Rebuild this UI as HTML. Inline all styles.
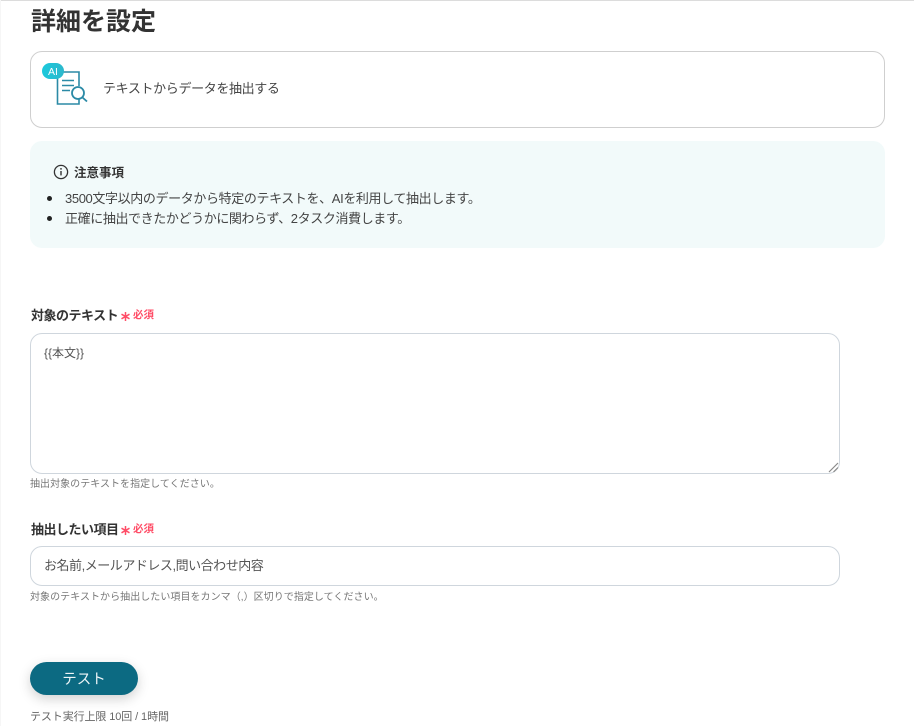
<!DOCTYPE html>
<html lang="ja">
<head>
<meta charset="utf-8">
<style>
html,body{margin:0;padding:0;background:#fff}
body{width:914px;height:726px;position:relative;overflow:hidden;font-family:"Liberation Sans","Noto Sans CJK JP",sans-serif;color:#333}
div,span{position:absolute;white-space:nowrap}
.abs{position:absolute}
.t{filter:blur(.3px)}
</style>
</head>
<body>
<div style="left:0;top:0;width:914px;height:1px;background:#dcdcdc"></div>
<div style="left:0;top:0;width:1px;height:726px;background:#f6f6f6"></div>

<div class="t" style="left:31px;top:7px;font-size:25px;line-height:30px;font-weight:700;color:#333">詳細を設定</div>

<div style="left:30px;top:51px;width:853px;height:75px;border:1px solid #cfcfcf;border-radius:12px"></div>
<svg class="abs t" style="left:40px;top:60px" width="50" height="46" viewBox="0 0 50 46">
<defs><linearGradient id="g" x1="0" y1="0" x2="1" y2="0"><stop offset="0" stop-color="#1bc9dc"/><stop offset="1" stop-color="#2cb8cc"/></linearGradient></defs>
<path d="M17.500 14V44H39V39M39 26V12H17.500" fill="none" stroke="#2b8aa6" stroke-width="1.600"/>
<path d="M22 20.500H34M22 25.500H34M22 30.500H30" stroke="#2b8aa6" stroke-width="1.600" fill="none"/>
<circle cx="38" cy="33" r="6" fill="#fff" stroke="#2b8aa6" stroke-width="1.800"/>
<path d="M42.500 37.500L47 41.500" stroke="#2b8aa6" stroke-width="1.800"/>
<rect x="2" y="3" width="22" height="16" rx="8" fill="url(#g)"/>
<text x="13" y="15" font-size="10.500" font-family="Liberation Sans" fill="#fff" text-anchor="middle">AI</text>
</svg>
<div class="t" style="left:103px;top:79px;font-size:13px;line-height:20px;letter-spacing:-.36px;color:#444">テキストからデータを抽出する</div>

<div style="left:30px;top:141px;width:855px;height:107px;background:#f2fafa;border-radius:12px"></div>
<svg class="abs t" style="left:53px;top:164px" width="16" height="16" viewBox="0 0 16 16">
<circle cx="8" cy="8" r="6.600" fill="none" stroke="#333" stroke-width="1.300"/>
<path d="M8 7V11.400" stroke="#333" stroke-width="1.400"/>
<circle cx="8" cy="4.900" r=".9" fill="#333"/>
</svg>
<div class="t" style="left:74px;top:164px;font-size:12.500px;line-height:19px;font-weight:700;color:#333">注意事項</div>
<div style="left:47px;top:196px;width:5px;height:5px;border-radius:50%;background:#222"></div>
<div style="left:47px;top:216px;width:5px;height:5px;border-radius:50%;background:#222"></div>
<div class="t" style="left:65px;top:189px;font-size:13px;line-height:19px;letter-spacing:-.38px;color:#444">3500文字以内のデータから特定のテキストを、AIを利用して抽出します。</div>
<div class="t" style="left:65px;top:209px;font-size:13px;line-height:19px;letter-spacing:-.39px;color:#444">正確に抽出できたかどうかに関わらず、2タスク消費します。</div>

<div class="t" style="left:31px;top:306px;font-size:13px;line-height:19px;font-weight:700;letter-spacing:-.5px;color:#333">対象のテキスト</div>
<svg class="abs t" style="left:120px;top:311px" width="11" height="11" viewBox="0 0 11 11"><path d="M5.500 1V10M1.500 3.200L9.500 7.800M9.500 3.200L1.500 7.800" stroke="#ff4d67" stroke-width="1.500"/></svg>
<div class="t" style="left:133px;top:307px;font-size:10.500px;line-height:17px;color:#ff4d67;font-weight:700">必須</div>
<div style="left:30px;top:333px;width:808px;height:139px;border:1px solid #cfd6dd;border-radius:12px"></div>
<div class="t" style="left:44px;top:344px;font-size:12px;line-height:18px;color:#555">{{本文}}</div>
<svg class="abs" style="left:828px;top:462px" width="11" height="11" viewBox="0 0 11 11">
<path d="M1 10L10 1M5.500 10L10 5.500" stroke="#8a8a8a" stroke-width="1.200" fill="none"/>
</svg>
<div class="t" style="left:30px;top:477px;font-size:10px;line-height:15px;letter-spacing:.04px;color:#777">抽出対象のテキストを指定してください。</div>

<div class="t" style="left:31px;top:520px;font-size:13px;line-height:19px;font-weight:700;letter-spacing:-.5px;color:#333">抽出したい項目</div>
<svg class="abs t" style="left:120px;top:525px" width="11" height="11" viewBox="0 0 11 11"><path d="M5.500 1V10M1.500 3.200L9.500 7.800M9.500 3.200L1.500 7.800" stroke="#ff4d67" stroke-width="1.500"/></svg>
<div class="t" style="left:133px;top:521px;font-size:10.500px;line-height:17px;color:#ff4d67;font-weight:700">必須</div>
<div style="left:30px;top:546px;width:808px;height:38px;border:1px solid #cfd6dd;border-radius:12px"></div>
<div class="t" style="left:44px;top:556px;font-size:13px;line-height:20px;letter-spacing:-.47px;color:#555">お名前,メールアドレス,問い合わせ内容</div>
<div class="t" style="left:30px;top:590px;font-size:10px;line-height:15px;letter-spacing:.05px;color:#777">対象のテキストから抽出したい項目をカンマ（,）区切りで指定してください。</div>

<div style="left:30px;top:662px;width:108px;height:33px;background:#0c6a82;border-radius:17px;box-shadow:0 4px 12px rgba(0,0,0,.18)"></div>
<div class="t" style="left:30px;top:664px;width:108px;height:33px;line-height:33px;text-align:center;font-size:14.500px;color:#eef5f7">テスト</div>
<div class="t" style="left:30px;top:709px;font-size:11px;line-height:16px;letter-spacing:-.1px;color:#666">テスト実行上限 10回 / 1時間</div>
</body>
</html>
